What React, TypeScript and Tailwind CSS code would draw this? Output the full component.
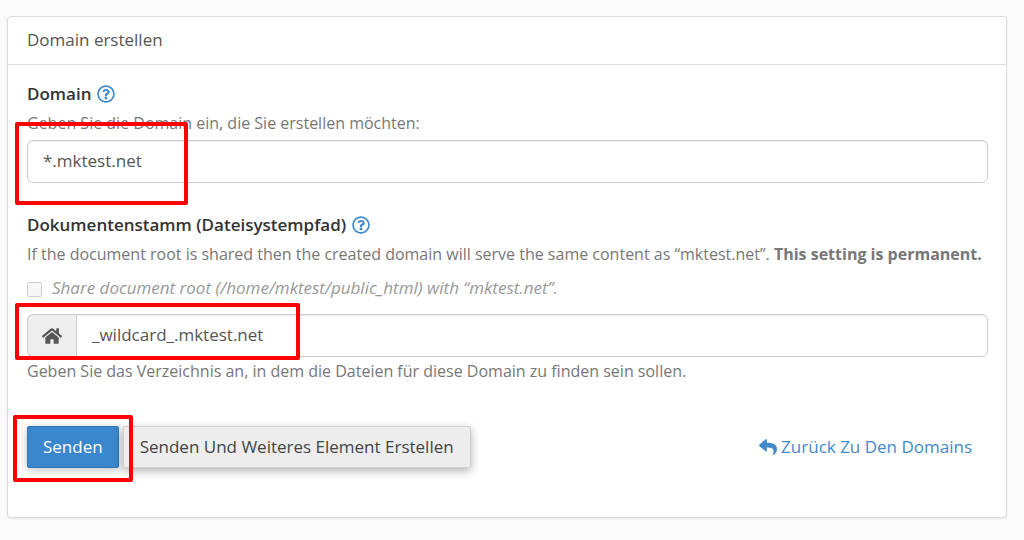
import type { ReactNode } from "react";
import { FaHome, FaRegQuestionCircle, FaReply } from "react-icons/fa";

function Highlight({ className }: { className: string }) {
  return (
    <span
      aria-hidden="true"
      className={`pointer-events-none absolute z-10 rounded-xs border-4 border-[#ff0000] ${className}`}
    />
  );
}

function FieldLabel({ htmlFor, children }: { htmlFor: string; children: ReactNode }) {
  return (
    <div className="flex items-center gap-1.5 text-[17px]/6 font-semibold text-[#333333]">
      <label htmlFor={htmlFor}>{children}</label>
      <button type="button" aria-label="Hilfe" className="text-[#428bca]">
        <FaRegQuestionCircle className="size-[18px]" />
      </button>
    </div>
  );
}

export default function App() {
  return (
    <main className="min-h-screen bg-[#fafafa] pt-4 pr-[17px] pb-5 pl-[7px] font-['Open_Sans',sans-serif] text-[#777777]">
      <section className="rounded border border-[#dddddd] bg-white shadow-[0_1px_2px_rgba(0,0,0,0.08)]">
        <h1 className="border-b border-[#dddddd] px-[19px] pt-[11px] pb-3 text-[17px]/6 text-[#555555]">Domain erstellen</h1>
        <form className="pt-[17px] pr-[18px] pb-[49px] pl-[19px]" onSubmit={(e) => e.preventDefault()}>
          <FieldLabel htmlFor="domain">Domain</FieldLabel>
          <p className="mt-[5px] text-base/6">Geben Sie die Domain ein, die Sie erstellen möchten:</p>
          <div className="relative mt-[5px]">
            <input
              id="domain"
              type="text"
              defaultValue="*.mktest.net"
              className="block h-[43px] w-full rounded-md border border-[#cccccc] bg-white px-[15px] pb-0.5 text-[17px] text-[#555555] shadow-[inset_0_1px_1px_rgba(0,0,0,0.075)] outline-none"
            />
            <Highlight className="-top-[18px] -left-3 h-[83px] w-[173px]" />
          </div>

          <div className="mt-[30px]">
            <FieldLabel htmlFor="docroot">Dokumentenstamm (Dateisystempfad)</FieldLabel>
            <p className="mt-[5px] text-base/6">
              If the document root is shared then the created domain will serve the same content as “mktest.net”.{" "}
              <strong className="font-bold">This setting is permanent.</strong>
            </p>
            <label className="mt-2.5 flex items-center gap-2.5 text-[17px]/6 text-[#999999] italic">
              <input
                type="checkbox"
                disabled
                className="mt-0.5 size-[15px] appearance-none rounded-xs border border-[#cfcfcf] bg-[#f7f7f7]"
              />
              Share document root (/home/mktest/public_html) with “mktest.net”.
            </label>
            <div className="relative mt-3.5 flex h-[43px]">
              <span className="flex w-[49px] items-center justify-center rounded-l-md border border-r-0 border-[#cccccc] bg-[#eeeeee] text-[#555555]">
                <FaHome className="size-5" />
              </span>
              <input
                id="docroot"
                type="text"
                defaultValue="_wildcard_.mktest.net"
                className="min-w-0 flex-1 rounded-r-md border border-[#cccccc] bg-white px-[15px] pb-0.5 text-[17px] text-[#555555] shadow-[inset_0_1px_1px_rgba(0,0,0,0.075)] outline-none"
              />
              <Highlight className="-top-[11px] -left-3 h-[57px] w-[285px]" />
            </div>
            <p className="mt-0.5 text-base/6">
              Geben Sie das Verzeichnis an, in dem die Dateien für diese Domain zu finden sein sollen.
            </p>
          </div>

          <div className="mt-[43px] flex items-center justify-between pr-4">
            <div className="relative flex gap-1">
              <button
                type="submit"
                className="h-[42px] rounded-xs border border-[#2f76b5] bg-[#3a87cd] px-[15px] text-[17px] text-white shadow-[0_2px_10px_rgba(0,0,0,0.25)]"
              >
                Senden
              </button>
              <button
                type="button"
                className="h-[42px] rounded-xs border border-[#d0d0d0] bg-[#ededed] px-4 text-[17px] text-[#444444] shadow-[0_3px_10px_rgba(0,0,0,0.3)]"
              >
                Senden Und Weiteres Element Erstellen
              </button>
              <Highlight className="-top-[11px] -left-3.5 h-[67px] w-[120px]" />
            </div>
            <a href="#domains" className="flex items-center gap-1 text-[17px] text-[#428bca]">
              <FaReply className="size-[18px]" />
              Zurück Zu Den Domains
            </a>
          </div>
        </form>
      </section>
    </main>
  );
}
